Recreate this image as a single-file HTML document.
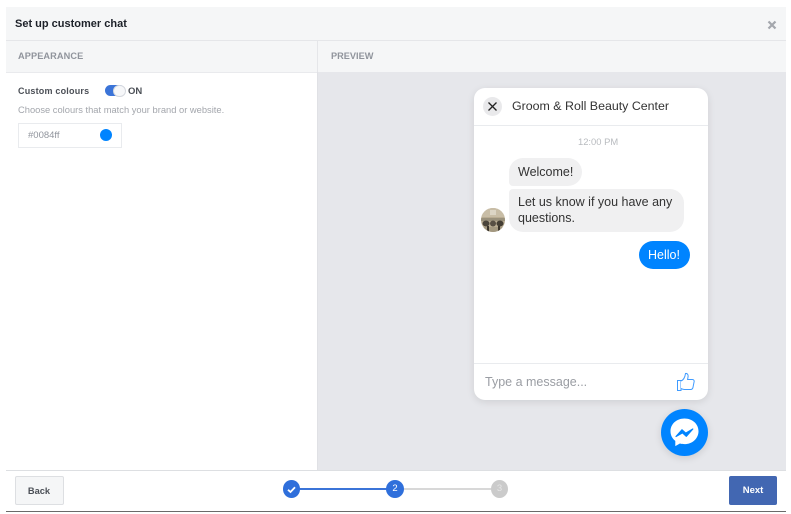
<!DOCTYPE html>
<html><head><meta charset="utf-8"><style>
html,body{margin:0;padding:0;background:#fff}
body{width:791px;height:514px;position:relative;overflow:hidden;font-family:"Liberation Sans",sans-serif}
#w{position:absolute;left:0;top:0;width:791px;height:514px;filter:blur(.3px)}
.a{position:absolute;white-space:nowrap}
</style></head><body><div id="w">
<!-- modal -->
<div class="a" style="left:6px;top:7px;width:780px;height:33px;background:#f5f6f7"></div>
<div class="a" style="left:6px;top:40px;width:780px;height:1px;background:#e5e6e9"></div>
<div class="a" style="left:6px;top:41px;width:780px;height:31px;background:#f5f6f7"></div>
<div class="a" style="left:6px;top:72px;width:311px;height:1px;background:#e9eaed"></div>
<div class="a" style="left:317px;top:41px;width:1px;height:31px;background:#e5e6e9"></div>
<div class="a" style="left:318px;top:72px;width:468px;height:398px;background:#e6e7eb"></div>
<div class="a" style="left:317px;top:72px;width:1px;height:398px;background:#e0e1e5"></div>
<div class="a" style="left:15px;top:17px;font-size:11px;font-weight:bold;color:#1d2129;line-height:15px">Set up customer chat</div>
<svg class="a" style="left:767px;top:20px" width="10" height="10" viewBox="0 0 10 10"><path d="M1.500 1.500L8.500 8.500M8.500 1.500L1.500 8.500" stroke="#a4a7ad" stroke-width="2.200"/></svg>
<div class="a" style="left:18px;top:50px;font-size:9.200px;font-weight:bold;color:#90949c;line-height:13px;letter-spacing:.1px">APPEARANCE</div>
<div class="a" style="left:331px;top:50px;font-size:9.200px;font-weight:bold;color:#90949c;line-height:13px">PREVIEW</div>
<div class="a" style="left:18px;top:85px;font-size:9px;font-weight:bold;color:#4b4f56;line-height:12px;letter-spacing:.2px">Custom colours</div>
<div class="a" style="left:105px;top:85px;width:20px;height:11px;border-radius:6px;background:#3b74d8"></div>
<div class="a" style="left:113px;top:85px;width:11px;height:10px;border-radius:6px;background:#f6f7f9;border:.5px solid #d5d8de"></div>
<div class="a" style="left:128px;top:85px;font-size:9.500px;font-weight:bold;color:#4b4f56;line-height:13px">ON</div>
<div class="a" style="left:18px;top:104px;font-size:9.350px;color:#a3a6ac;line-height:13px">Choose colours that match your brand or website.</div>
<div class="a" style="left:18px;top:123px;width:102px;height:23px;border:1px solid #e9ebee;background:#fff"></div>
<div class="a" style="left:28px;top:129px;font-size:9.500px;color:#90949c;line-height:13px">#0084ff</div>
<div class="a" style="left:100px;top:129px;width:12px;height:12px;border-radius:50%;background:#0084ff"></div>
<!-- chat card -->
<div class="a" style="left:474px;top:88px;width:234px;height:312px;border-radius:11px;background:#fff;box-shadow:0 2px 8px rgba(0,0,0,.1)"></div>
<div class="a" style="left:474px;top:125px;width:234px;height:1px;background:#e9ebee"></div>
<div class="a" style="left:474px;top:363px;width:234px;height:1px;background:#e9ebee"></div>
<div class="a" style="left:483px;top:97px;width:19px;height:19px;border-radius:50%;background:#e9e9eb"></div>
<svg class="a" style="left:487px;top:101px" width="11" height="11" viewBox="0 0 11 11"><path d="M1.500 1.500L9.500 9.500M9.500 1.500L1.500 9.500" stroke="#222" stroke-width="1.300"/></svg>
<div class="a" style="left:512px;top:98px;font-size:12.400px;color:#333;line-height:17px">Groom &amp; Roll Beauty Center</div>
<div class="a" style="left:578px;top:135px;font-size:9.400px;color:#b8bbbf;line-height:13px">12:00 PM</div>
<div class="a" style="left:509px;top:158px;width:73px;height:28px;background:#f0f0f1;border-radius:14px 14px 14px 4px"></div>
<div class="a" style="left:518px;top:165px;font-size:12.500px;color:#333;line-height:15px">Welcome!</div>
<div class="a" style="left:509px;top:189px;width:175px;height:43px;background:#f0f0f1;border-radius:4px 14px 14px 14px"></div>
<div class="a" style="left:518px;top:195px;font-size:12.500px;color:#333;line-height:15.500px">Let us know if you have any<br>questions.</div>
<svg class="a" style="left:481px;top:208px" width="24" height="24" viewBox="0 0 24 24"><defs><clipPath id="c"><circle cx="12" cy="12" r="12"/></clipPath></defs><g clip-path="url(#c)"><rect width="24" height="24" fill="#b9ac92"/><rect y="0" width="24" height="9" fill="#c8bda6"/><rect x="9" y="2" width="6" height="5" fill="#dcd5c5"/><rect y="10" width="24" height="3" fill="#9a917c"/><ellipse cx="5" cy="15.500" rx="3.500" ry="3" fill="#4a443a"/><ellipse cx="12" cy="15.500" rx="3" ry="3" fill="#574f44"/><ellipse cx="19" cy="15.500" rx="3.500" ry="3" fill="#443e34"/><rect y="19" width="24" height="5" fill="#a39880"/><rect x="6" y="18" width="2" height="6" fill="#3a342b"/><rect x="17" y="18" width="2" height="6" fill="#3a342b"/></g></svg>
<div class="a" style="left:639px;top:241px;width:51px;height:28px;background:#0084ff;border-radius:14px"></div>
<div class="a" style="left:648px;top:248px;font-size:12.500px;color:#fff;line-height:15px">Hello!</div>
<div class="a" style="left:485px;top:374px;font-size:12.500px;color:#9a9da3;line-height:16px">Type a message...</div>
<svg class="a" style="left:676px;top:372px" width="19" height="20" viewBox="0 0 19 20" fill="#fff" stroke="#3f9bff" stroke-width="1"><rect x="1.500" y="8.500" width="3.500" height="10"/><path d="M5 9C7.500 8 9 5 9.500 1.500c1.800-.4 2.800 1.300 2.600 3L11.600 7.500h4.800c1.400 0 2 1.200 1.700 2.300l-1.200 6c-.3 1.200-1 1.700-2.200 1.700H8.500C7 17.500 6 17 5 16.500"/></svg>
<!-- messenger -->
<div class="a" style="left:661px;top:409px;width:47px;height:47px;border-radius:50%;background:#0084ff;box-shadow:0 2px 8px rgba(0,0,0,.12)"></div>
<svg class="a" style="left:669px;top:417px" width="31" height="32" viewBox="0 0 31 32"><path d="M15.500 1.500C7.600 1.500 1.500 7 1.500 14.200c0 4 1.800 7.400 4.800 9.700v5.200l4.600-2.600c1.400.4 3 .6 4.600.6 7.900 0 14-5.700 14-12.900S23.400 1.500 15.500 1.500z" fill="#fff"/><path d="M7 19.500L13 12.800l3.800 3.400 7-4.200-6.500 7.300-3.800-3.500z" fill="#0084ff" stroke="#0084ff" stroke-width="1.200" stroke-linejoin="round"/></svg>
<!-- footer -->
<div class="a" style="left:6px;top:470px;width:780px;height:1px;background:#dddfe2"></div>
<div class="a" style="left:15px;top:476px;width:47px;height:27px;background:#f5f6f7;border:1px solid #dddfe2;border-radius:2px"></div>
<div class="a" style="left:15px;top:477px;width:48px;height:29px;text-align:center;font-size:9.300px;font-weight:bold;color:#4b4f56;line-height:28px">Back</div>
<div class="a" style="left:299px;top:488px;width:90px;height:2px;background:#3b74d8"></div>
<div class="a" style="left:402px;top:488px;width:92px;height:2px;background:#d8d8d8"></div>
<div class="a" style="left:282.500px;top:480px;width:17.500px;height:18px;border-radius:50%;background:#2f6fdb"></div>
<svg class="a" style="left:282.500px;top:480.500px" width="17" height="17" viewBox="0 0 17 17"><path d="M5 8.800L7.500 11 12 6.300" fill="none" stroke="#fff" stroke-width="1.800"/></svg>
<div class="a" style="left:386px;top:480px;width:18px;height:18px;border-radius:50%;background:#2f6fdb;color:#fff;font-size:9.500px;line-height:18px;text-align:center">2</div>
<div class="a" style="left:491px;top:480px;width:17px;height:18px;border-radius:50%;background:#cbcbcb;color:#e6e6e6;font-size:9.500px;line-height:18px;text-align:center">3</div>
<div class="a" style="left:729px;top:476px;width:48px;height:29px;background:#4267b2;border-radius:2px;text-align:center;color:#fff;font-size:9.500px;font-weight:bold;line-height:29px">Next</div>
<div class="a" style="left:6px;top:511px;width:780px;height:1px;background:#6a6a6a"></div>
</div></body></html>
